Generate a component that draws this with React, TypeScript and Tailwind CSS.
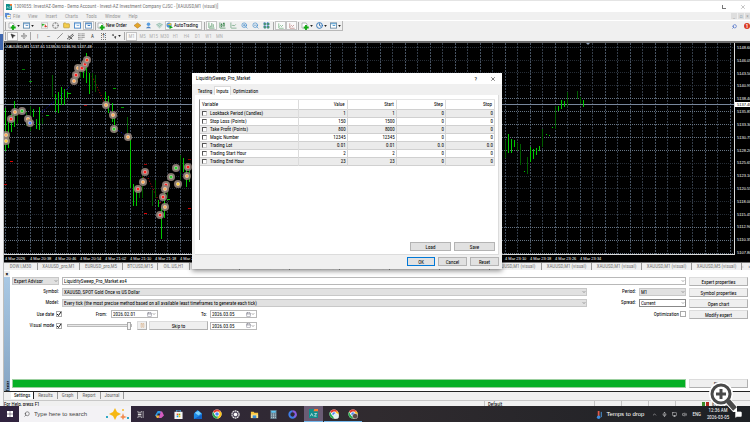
import React from "react";
import {
  BarChart3, Calendar, CandlestickChart, ChartLine, ChevronDown, ChevronUp, Clock, Crosshair, Folder,
  LayoutGrid, MessageSquare, MousePointer2, Mic, Monitor, Move, Pause, Search, Slash, Volume2, Wifi, X, ZoomIn, ZoomOut,
} from "lucide-react";

type Candle = [number, number, number, number];

const candles: Candle[] = [
  [5, 108, 151, 1], [8, 118, 148, 1], [11, 114, 132, 1], [14, 101, 127, 1], [17, 110, 124, 0], [26, 112, 126, 0], [30, 106, 131, 0],
  [33, 109, 117, 1], [36, 119, 129, 1], [39, 107, 130, 1], [42, 118, 124, 0], [52, 75, 97, 0], [55, 94, 112, 1], [58, 92, 113, 1],
  [61, 87, 105, 1], [64, 89, 105, 1], [67, 92, 98, 1], [77, 64, 82, 0], [80, 64, 78, 0], [83, 66, 78, 1], [86, 53, 83, 1], [89, 73, 94, 1],
  [92, 73, 90, 0], [95, 75, 92, 0], [105, 92, 104, 1], [108, 96, 113, 1], [112, 103, 122, 1], [114, 118, 133, 1], [127, 117, 140, 0],
  [130, 140, 188, 1], [133, 184, 206, 1], [136, 190, 206, 1], [139, 188, 198, 0], [142, 176, 198, 0], [152, 190, 206, 0],
  [155, 180, 198, 0], [158, 200, 207, 1], [161, 207, 239, 1], [164, 187, 218, 1], [167, 181, 198, 0], [180, 155, 180, 0],
  [183, 158, 172, 1], [186, 165, 187, 1], [189, 170, 182, 1], [505, 140, 158, 0], [508, 134, 153, 1], [511, 139, 153, 1],
  [514, 140, 147, 1], [517, 143, 151, 0], [520, 144, 165, 0], [524, 171, 172, 1], [527, 157, 174, 0], [530, 147, 162, 1],
  [533, 149, 159, 1], [536, 148, 155, 1], [539, 146, 151, 1], [542, 129, 147, 0], [546, 134, 135, 1], [549, 135, 136, 1],
  [552, 127, 128, 1], [555, 106, 129, 0], [558, 106, 111, 1], [561, 100, 109, 1], [564, 101, 107, 1], [567, 92, 106, 0],
  [577, 91, 99, 0], [580, 97, 104, 0], [583, 100, 107, 1],
];

const trades: [number, number, string][] = [
  [74, 81, "#ffb060"], [76, 75, "#ff2020"], [78, 68, "#ffb060"], [82, 68, "#ff2020"], [85, 64, "#ff2020"], [87, 60, "#ff4020"],
  [22, 111, "#30d030"], [15, 112, "#ffb060"], [11, 119, "#ff2020"], [28, 119, "#ffb060"], [30, 123, "#5080ff"], [106, 105, "#ffb060"],
  [113, 115, "#ffb060"], [114, 129, "#30d030"], [6, 135, "#ffb060"], [6, 141, "#ffd040"], [128, 137, "#ffb060"], [145, 172, "#ff2020"],
  [143, 182, "#ffb060"], [138, 189, "#ff2020"], [176, 168, "#30d030"], [171, 177, "#30d030"], [178, 184, "#ffd040"],
  [166, 185, "#ff2020"], [165, 189, "#ffb060"], [163, 197, "#ff2020"], [165, 207, "#ffb060"], [160, 215, "#ff2020"],
  [188, 167, "#ff2020"], [187, 176, "#ffb060"],
];

const marks: [number, number, string][] = [
  [22, 69, "#008000"], [29, 81, "#00a000"], [84, 105, "#a00000"], [113, 88, "#00a000"], [46, 115, "#00c000"], [68, 93, "#00c000"],
  [10, 161, "#e00000"], [4, 184, "#b00000"], [144, 164, "#a00000"], [144, 213, "#e00000"], [188, 208, "#e00000"], [188, 159, "#800000"],
  [121, 107, "#00a000"], [167, 199, "#00c000"],
];

const rowsY = [47, 60, 72, 85, 98, 111, 124, 137, 150, 163, 176, 188, 201, 214, 227, 240, 253];
const strong = [98, 111, 124, 137, 150, 227, 240, 253];
const prices = ["5148.60", "5146.05", "5143.50", "5140.95", "5138.40", "5135.85", "5133.30", "5130.75", "5128.20", "5125.65", "5123.10", "5120.55", "5118.00", "5115.45", "5112.90", "5110.35", "5107.80"];
const times = ["4 Mar 2026", "4 Mar 20:38", "4 Mar 20:46", "4 Mar 20:54", "4 Mar 21:02", "4 Mar 21:10", "4 Mar 21:18", "4 Mar 21:26", "4 Mar 21:34", "4 Mar 21:42", "4 Mar 21:50", "4 Mar 21:58", "4 Mar 22:06", "4 Mar 22:14", "4 Mar 22:22", "4 Mar 22:30", "4 Mar 22:38", "4 Mar 22:46", "4 Mar 22:54", "4 Mar 23:02", "4 Mar 23:10", "4 Mar 23:18", "4 Mar 23:26", "4 Mar 23:34"];

const narrow = "font-['Liberation_Sans_Narrow','Roboto_Condensed','Open_Sans_Condensed','DejaVu_Sans_Condensed','Liberation_Sans',sans-serif]";

function Plot() {
  return (
    <svg className="block h-[211px] w-full" aria-label="XAUUSD price chart">
      <defs>
        <pattern id="cols" x="1" y="0" width="25" height="3" patternUnits="userSpaceOnUse">
          <rect x="0" width="1" height="2" fill="#465261" />
          <rect x="12" width="1" height="2" fill="#333c48" />
        </pattern>
      </defs>
      <rect width="100%" height="100%" fill="url(#cols)" />
      <g transform="translate(-4 -43)">
        {rowsY.map((y) => (
          <line key={y} x1="4" x2="3000" y1={y + 0.5} y2={y + 0.5} stroke={strong.includes(y) ? "#667484" : "#262d36"} strokeDasharray="1 1" />
        ))}
        <line x1="4" x2="3000" y1="104.5" y2="104.5" stroke="#78879c" />
        <path d="M42 112L56 100L70 86M22 111L30 123L36 122M106 105L114 116M116 129L128 137M175 168L184 176M158 206L161 200" fill="none" stroke="#1515d0" strokeDasharray="1 2" />
        <path d="M92 76L106 106M148 178L160 204L166 190M11 119L15 112L20 115M138 189L145 174" fill="none" stroke="#d01010" strokeDasharray="1 2" />
        {candles.map(([x, a, b, bright]) => (
          <rect key={x} x={x} y={a} width="1" height={b - a} fill={bright ? "#00c800" : "#005c00"} />
        ))}
        {marks.map(([x, y, c]) => <rect key={x + "-" + y} x={x} y={y} width="3" height="1" fill={c} />)}
        {trades.map(([x, y, c]) => (
          <g key={x + "-" + y}>
            <circle cx={x} cy={y} r="4" fill="#94837a" fillOpacity=".9" />
            <circle cx={x} cy={y} r="2" fill="#d9cfc6" />
            <circle cx={x} cy={y} r="1.5" fill={c} />
          </g>
        ))}
        <path d="M586 43h4l-2 2z" fill="#8c9db5" />
      </g>
    </svg>
  );
}

function Tool({ label, pressed, drop, children }: { label: string; pressed?: boolean; drop?: boolean; children: React.ReactNode }) {
  return (
    <button aria-label={label} className={`flex h-[9px] shrink-0 items-center justify-center ${drop ? "w-[14px]" : "w-[11px]"} ${pressed ? "border border-[#c4c4c4] bg-[#fafafa]" : ""}`}>
      {children}
      {drop && <svg viewBox="0 0 4 3" className="ml-px h-[2px] w-[3px] shrink-0"><path d="M0 0h4L2 3z" fill="#222" /></svg>}
    </button>
  );
}

const Sep = () => <span className="mx-px h-[8px] w-px shrink-0 bg-[#a8a8a8]" />;

function DocPlus({ fill = "#fff" }: { fill?: string }) {
  return (
    <svg viewBox="0 0 8 8" className="size-[8px] shrink-0">
      <path d="M1 1h4l1 1v4H1z" fill={fill} stroke="#8a8f94" strokeWidth=".6" />
      <path d="M5 3v5M2.700 5.500h5" stroke="#12a812" strokeWidth="1.800" />
    </svg>
  );
}

function PaneIcon({ a, b }: { a: string; b: string }) {
  return (
    <svg viewBox="0 0 8 8" className="size-[7px] shrink-0">
      <rect x=".5" y="1" width="7" height="6" fill="#fff" stroke={a} />
      <path d="M1 2h6M3 4h3" stroke={b} strokeWidth="1.200" />
    </svg>
  );
}

function TopBars() {
  return (
    <header className={`text-[5px] leading-[7px] ${narrow}`}>
      <div className="flex h-[12px] items-center border-t border-[#e4e4e4] bg-white pl-[2px] pr-1 text-[#777]">
        <svg viewBox="0 0 7 7" className="mr-[2px] size-[6px]"><rect width="7" height="7" fill="#0f8d8c" /><path d="M4 0h3v2H5z" fill="#ff7a30" /><path d="M1 5l1-2 1 2M4 3h2L4 5h2" fill="none" stroke="#fff" strokeWidth=".6" /></svg>
        <h1 className="flex-1 whitespace-nowrap">1309055: InvestAZ-Demo - Demo Account - Invest-AZ Investment Company CJSC - [XAUUSD,M1 (visual)]</h1>
        <button aria-label="Maximize" className="mr-[14px] size-[4px] border-b border-l border-[#777]" />
        <button aria-label="Close window"><X size={6} color="#888" /></button>
      </div>
      <nav className="flex h-[9px] items-center gap-[8px] border-b border-white pl-[1px] text-[#999]">
        <svg viewBox="0 0 7 7" className="-mr-[6px] size-[6px]"><rect width="5" height="5" fill="#5b8fd8" /><rect x="2" y="2" width="5" height="5" fill="#fff" stroke="#4a78c0" strokeWidth=".8" /><path d="M3 4h3" stroke="#e0b030" /></svg>
        {["File", "View", "Insert", "Charts", "Tools", "Window", "Help"].map((m) => <button key={m}>{m}</button>)}
        <span className="flex flex-1 justify-end gap-px">
          <button aria-label="Minimize chart" className="h-[6px] w-[6px] bg-[#dedede] leading-[4px]">_</button>
          <button aria-label="Restore chart" className="h-[6px] w-[6px] bg-[#dedede] leading-[5px] text-[#5b7fa0]">▫</button>
          <button aria-label="Close chart" className="h-[6px] w-[5px] bg-[#dedede] leading-[5px]">×</button>
        </span>
      </nav>
      <div className="flex h-[10px] items-center">
        <div className="flex h-[10px] items-center border-b border-r border-[#b8b8b8]">
          <Sep />
          <Tool label="New chart" drop><DocPlus /></Tool>
          <Tool label="Profiles" drop><PaneIcon a="#5b88ad" b="#6fa0d0" /></Tool>
          <span className="w-[4px]" />
          <Tool label="Market watch"><svg viewBox="0 0 8 8" className="size-[7px]"><rect x=".5" y="1" width="7" height="6" fill="#fff" stroke="#c0c0c0" /><path d="M2 2v3M1 3h3" stroke="#12a812" /><path d="M5 3v3M4 5h3" stroke="#d03020" /></svg></Tool>
          <Tool label="Data window"><Crosshair size={7} color="#777" /></Tool>
          <Tool label="Navigator"><Folder size={7} color="#ad8a20" fill="#f4cd4d" /></Tool>
          <Tool label="Terminal"><PaneIcon a="#3d7fc4" b="#8bb8e4" /></Tool>
          <Tool label="Strategy tester" pressed><PaneIcon a="#6a90b8" b="#3d7fc4" /></Tool>
          <Sep />
          <button className="flex w-[35px] items-center gap-px text-black"><DocPlus /><span className="whitespace-nowrap">New Order</span></button>
          <Tool label="MetaEditor"><svg viewBox="0 0 8 8" className="size-[7px]"><path d="M4 1l4 3-4 3-4-3z" fill="#e5a72b" stroke="#a8701a" strokeWidth=".6" /></svg></Tool>
          <Tool label="Community"><svg viewBox="0 0 8 8" className="size-[7px]"><circle cx="4" cy="2.500" r="2" fill="#5a9ee0" /><path d="M1 7q3-4 6 0z" fill="#4b80c0" /></svg></Tool>
          <Tool label="Signals"><Wifi size={7} color="#4a9a7c" /></Tool>
          <button className="flex h-[9px] w-[37px] items-center gap-px border border-[#c4c4c4] bg-[#fafafa] text-black">
            <svg viewBox="0 0 8 8" className="size-[7px] shrink-0"><circle cx="3.500" cy="3.500" r="3" fill="#4f93d8" /><path d="M1 3l5-2v3z" fill="#f0c040" /><path d="M4 4v4l4-2z" fill="#12a812" /></svg>
            <span>AutoTrading</span>
          </button>
          <span className="w-px" /><Sep />
          <Tool label="Bar chart" pressed><BarChart3 size={7} color="#287a3c" /></Tool>
          <Tool label="Candlesticks"><CandlestickChart size={7} color="#287a3c" /></Tool>
          <Tool label="Line chart"><ChartLine size={7} color="#4c9160" /></Tool>
          <Tool label="Zoom in"><ZoomIn size={7} color="#2c80c8" /></Tool>
          <Tool label="Zoom out"><ZoomOut size={7} color="#2c80c8" /></Tool>
          <Tool label="Tile windows"><LayoutGrid size={7} color="#2b72c0" fill="#64b530" /></Tool>
          <Sep />
          <Tool label="Auto scroll" pressed><ChartLine size={6} color="#349048" /></Tool>
          <Tool label="Chart shift" pressed><ChartLine size={6} color="#a04c48" /></Tool>
          <Sep />
          <Tool label="Indicators" drop><DocPlus /></Tool>
          <Tool label="Periods" drop><Clock size={7} color="#226cb4" strokeWidth={3} /></Tool>
          <Tool label="Templates" drop><PaneIcon a="#6a88a0" b="#54a0d4" /></Tool>
        </div>
        <span className="flex flex-1 items-center justify-end gap-[7px]">
          <Search size={5} color="#3b62c4" strokeWidth={3} className="-scale-x-100" />
          <span className="size-[6px] rounded-full bg-[#d93a22] text-center font-bold leading-[6px] text-white">1</span>
        </span>
      </div>
      <div className="flex h-[10px] items-center text-[#333]">
        <Sep />
        <Tool label="Cursor" pressed><MousePointer2 size={6} fill="#333" /></Tool>
        <Tool label="Crosshair"><Move size={6} color="#555" /></Tool>
        <Sep />
        <Tool label="Vertical line">|</Tool>
        <Tool label="Horizontal line">—</Tool>
        <Tool label="Trend line"><Slash size={6} /></Tool>
        <Tool label="Channel"><svg viewBox="0 0 8 8" className="size-[7px]"><path d="M0 7l7-6M2 8l6-6M1 3l5 4" stroke="#333" strokeWidth=".9" /></svg></Tool>
        <Tool label="Fibonacci"><svg viewBox="0 0 8 8" className="size-[7px]"><path d="M0 1h8M0 3h8M0 5h8M0 7h5" stroke="#555" strokeWidth=".8" strokeDasharray="1 .5" /></svg></Tool>
        <Tool label="Text">A</Tool>
        <Tool label="Text label"><span className="border border-dotted border-[#777] leading-[5px]">T</span></Tool>
        <Tool label="Arrows" drop><svg viewBox="0 0 8 8" className="size-[6px]"><path d="M1 3l2-2 1 3zM4 5l3-1-1 4z" fill="#333" /></svg></Tool>
        <Sep />
        <span className="flex text-[#b0b0b0]">
          {["M1", "M5", "M15", "M30", "H1", "H4", "D1", "W1", "MN"].map((p, i) => <Tool key={p} label={p} pressed={i === 0}>{p}</Tool>)}
        </span>
      </div>
    </header>
  );
}

function Chart() {
  return (
    <main className="h-[221px] border-t-2 border-[#6e6e6e] bg-black text-[4px] leading-[5px] text-white">
      <div className="flex">
        <div className="relative min-w-0 flex-1 border-b border-r border-[#dcdcdc]">
          <Plot />
          <p className="absolute left-[2px] top-[1px] whitespace-nowrap">XAUUSD,M1 5137.61 5138.30 5136.96 5137.48</p>
        </div>
        <div className="relative flex w-[15px] flex-col justify-between overflow-hidden pl-[2px] pt-[2px]">
          {prices.map((p) => <span key={p}>{p}</span>)}
          <span className="absolute left-0 top-[59px] w-full bg-white pl-[2px] text-black">5137.48</span>
        </div>
      </div>
      <div className="flex overflow-hidden pl-px pt-[1px]">
        {times.map((t) => <span key={t} className="w-[25px] shrink-0 whitespace-nowrap">{t}</span>)}
      </div>
    </main>
  );
}

const chartTabs: [string, string][] = [
  ["DOW.I,M30", "w-[34px]"], ["XAUUSD_pro,M1", "w-[42px]"], ["EURUSD_pro,M5", "w-[43px]"], ["BTCUSD,M15", "w-[35px]"], ["OIL.US,H1", "w-[32px]"],
  ["XAUUSD,M1 (visual)", "w-[50px]"], ["XAUUSD,M1 (visual)", "w-[50px]"], ["XAUUSD,M1 (visual)", "w-[50px]"], ["XAUUSD,M1 (visual)", "w-[50px]"],
  ["XAUUSD,M1 (visual)", "w-[50px]"], ["XAUUSD,M1 (visual)", "w-[50px]"], ["XAUUSD,M1 (visual)", "w-[52px]"], ["XAUUSD,M1 (visual)", "w-[50px]"],
  ["XAUUSD,M1 (visual)", "w-[50px]"], ["XAUUSD,M1 (visual)", "w-[50px]"], ["XAUUSD,M5 (visual)", "w-[50px]"],
];

const selectLook = "block h-[8px] w-full appearance-none border pl-px pr-[8px] leading-[6px] text-black";

function Drop({ label, value, tone = "border-[#c8c8c8] bg-[#e1e1e1]" }: { label: string; value: string; tone?: string }) {
  return (
    <span className="relative block flex-1">
      <select aria-label={label} className={`${selectLook} ${tone}`}><option>{value}</option></select>
      <ChevronDown size={4} className="pointer-events-none absolute right-[1px] top-[2px]" />
    </span>
  );
}

function DateBox({ label, value }: { label: string; value: string }) {
  return (
    <span className="flex h-[8px] w-[47px] items-center border border-[#b8b8b8] bg-white pr-px">
      <input aria-label={label} defaultValue={value} className="w-0 flex-1 pl-px leading-[6px] outline-none" />
      <Calendar size={5} color="#667" /><ChevronDown size={4} />
    </span>
  );
}

function Check({ id, checked }: { id: string; checked?: boolean }) {
  return (
    <span className="relative block size-[6px]">
      <input id={id} type="checkbox" defaultChecked={checked} className="block size-[6px] appearance-none border border-[#aaa] bg-white" />
      {checked && <svg viewBox="0 0 6 6" className="pointer-events-none absolute inset-0 size-[6px]"><path d="M1 3l1.500 1.500L5 1" fill="none" stroke="#111" /></svg>}
    </span>
  );
}

const face = "border border-b-[#b0b0b0] border-r-[#b0b0b0] border-l-[#dcdcdc] border-t-[#dcdcdc] bg-[#efefef] text-center leading-[6px]";

function Tester() {
  return (
    <section className={`flex h-[120px] text-[5px] leading-[7px] text-black ${narrow}`}>
      <div className="flex w-[6px] flex-col bg-[#f0f0f0]">
        <button aria-label="Close tester" className="h-[6px] text-center text-[6px] font-bold leading-[6px]">×</button>
        <div className="flex flex-1 items-end justify-center bg-gradient-to-b from-[#a9c8e4] to-[#86a5c4]">
          <span className="text-[4px] font-bold leading-[5px] [writing-mode:sideways-lr]">Tester</span>
        </div>
      </div>
      <div className="flex flex-1 flex-col justify-between bg-white pb-[3px] pl-[2px] pr-[2px] pt-[6px]">
        <div className="flex gap-[3px]">
          <div className="flex flex-1 flex-col gap-[3px]">
            <div className="flex gap-[3px]">
              <span className="flex w-[47px]"><Drop label="Test type" value="Expert Advisor" /></span>
              <Drop label="Expert" value="LiquiditySweep_Pro_Market.ex4" tone="border-[#b8b8b8] bg-white" />
            </div>
            <div className="flex gap-[3px]">
              <span className="w-[47px] text-right">Symbol:</span><Drop label="Symbol" value="XAUUSD, SPOT Gold Once vs US Dollar" />
              <span className="w-[46px] text-right">Period:</span><span className="flex w-[47px]"><Drop label="Period" value="M1" /></span>
            </div>
            <div className="flex gap-[3px]">
              <span className="w-[47px] text-right">Model:</span><Drop label="Model" value="Every tick (the most precise method based on all available least timeframes to generate each tick)" />
              <span className="w-[46px] text-right">Spread:</span><span className="flex w-[47px]"><Drop label="Spread" value="Current" tone="border-[#888] bg-white" /></span>
            </div>
            <div className="flex items-center">
              <label htmlFor="use-date" className="mr-[2px] w-[42px] text-right">Use date</label><Check id="use-date" checked />
              <span className="w-[49px] pr-[4px] text-right">From:</span><DateBox label="From" value="2026.02.01" />
              <span className="w-[52px] pr-[3px] text-right">To:</span><DateBox label="To" value="2026.03.05" />
              <label htmlFor="optimization" className="mr-[1px] flex-1 text-right">Optimization</label><Check id="optimization" />
            </div>
            <div className="flex items-center">
              <label htmlFor="visual" className="mr-[2px] w-[42px] text-right">Visual mode</label><Check id="visual" checked />
              <span className="relative ml-[5px] flex h-[8px] w-[65px] items-center">
                <input aria-label="Speed" type="range" min="0" max="32" defaultValue="32" className="h-[3px] w-full appearance-none border border-[#bbb] bg-[#e8e8e8] [&::-webkit-slider-thumb]:h-[8px] [&::-webkit-slider-thumb]:w-[4px] [&::-webkit-slider-thumb]:appearance-none [&::-webkit-slider-thumb]:border [&::-webkit-slider-thumb]:border-[#aaa] [&::-webkit-slider-thumb]:bg-[#f4f4f4]" />
              </span>
              <button aria-label="Pause" className={`${face} ml-[5px] flex h-[9px] w-[10px] items-center justify-center`}><Pause size={5} color="#d8a878" /></button>
              <button className={`${face} ml-[2px] mr-[2px] h-[9px] w-[59px]`}>Skip to</button>
              <DateBox label="Skip date" value="2026.03.05" />
            </div>
          </div>
          <div className="flex w-[59px] flex-col gap-[2px]">
            {["Expert properties", "Symbol properties", "Open chart", "Modify expert"].map((b) => <button key={b} className={`${face} h-[9px]`}>{b}</button>)}
          </div>
        </div>
        <div className="flex gap-[3px]">
          <div role="progressbar" aria-label="Test progress" className="h-[9px] flex-1 border border-[#9bcf9f] bg-[#06b025]" />
          <button className={`${face} h-[9px] w-[59px]`}>Start</button>
        </div>
      </div>
    </section>
  );
}

const inputs = [
  ["Lookback Period (Candles)", "1", "1", "0", "0"], ["Stop Loss (Points)", "150", "1500", "0", "0"], ["Take Profit (Points)", "800", "8000", "0", "0"],
  ["Magic Number", "12345", "12345", "0", "0"], ["Trading Lot", "0.01", "0.01", "0.0", "0.0"], ["Trading Start Hour", "2", "2", "0", "0"], ["Trading End Hour", "23", "23", "0", "0"],
];

function Dialog() {
  const btn = "h-[9px] border border-[#b4b4b4] bg-[#e1e1e1] leading-[6px]";
  return (
    <div role="dialog" aria-label="LiquiditySweep_Pro_Market" className={`absolute left-[192px] top-[73px] flex h-[196px] w-[310px] flex-col bg-[#f0f0f0] text-[5px] leading-[7px] text-black shadow-[0_2px_5px_rgba(0,0,0,.45)] ${narrow}`}>
      <div className="flex h-[11px] items-center bg-white pl-[4px] pr-[6px]">
        <h2 className="flex-1">LiquiditySweep_Pro_Market</h2>
        <button aria-label="Help" className="mr-[13px] text-[6px]">?</button>
        <button aria-label="Close"><X size={6} /></button>
      </div>
      <div role="tablist" className="flex h-[11px] items-end pl-[4px]">
        <button role="tab" className="w-[18px]">Testing</button>
        <button role="tab" aria-selected="true" className="h-[9px] w-[17px] border-x border-t border-[#dadada] bg-white">Inputs</button>
        <button role="tab" className="pl-[2px]">Optimization</button>
      </div>
      <div className="mx-[3px] flex flex-1 flex-col border-b border-r border-[#dcdcdc] bg-white pl-[4px] pr-[3px] pt-[4px]">
        <div className="h-[141px] border-l border-t border-l-[#8a8a8a] border-t-[#e4e4e4]">
          <table className="w-full table-fixed border-collapse">
            <thead>
              <tr className="h-[9px] border-b border-[#d0d0d0]">
                {["Variable", "Value", "Start", "Step", "Stop"].map((h, i) => <th key={h} className={`border-r border-[#dcdcdc] p-0 font-normal ${i ? "pr-[2px] text-right" : "w-[98px] pl-[2px] text-left"}`}>{h}</th>)}
              </tr>
            </thead>
            <tbody>
              {inputs.map(([name, ...values], r) => (
                <tr key={name} className={`h-[8px] ${r % 2 ? "bg-white" : "border-y border-[#d0d0d0] bg-[#ebebeb]"}`}>
                  <td className="border-r border-[#dcdcdc] p-0">
                    <label className="flex items-center gap-[3px] pl-[2px]"><input type="checkbox" className="size-[5px] appearance-none border border-b-[#ccc] border-l-[#555] border-r-[#ccc] border-t-[#555] bg-white" />{name}</label>
                  </td>
                  {values.map((v, i) => <td key={i} className="border-r border-[#d4d4d4] p-0 pr-px text-right">{v}</td>)}
                </tr>
              ))}
            </tbody>
          </table>
        </div>
        <div className="flex justify-end gap-[3px] pt-[2px]">
          <button className={`${btn} w-[41px]`}>Load</button><button className={`${btn} w-[41px]`}>Save</button>
        </div>
      </div>
      <div className="flex h-[14px] items-start justify-end gap-[3px] pr-[3px] pt-[2px]">
        <button className="h-[9px] w-[28px] border border-[#0078d7] bg-[#e1e1e1] leading-[6px]">OK</button>
        <button className={`${btn} w-[29px]`}>Cancel</button><button className={`${btn} w-[29px]`}>Reset</button>
      </div>
    </div>
  );
}

function Chrome({ user }: { user?: string }) {
  return (
    <svg viewBox="0 0 24 24" className="size-[10px]">
      <circle cx="12" cy="12" r="11" fill="#fff" />
      <path d="M12 1a11 11 0 0 1 9.500 5.500H12a5.500 5.500 0 0 0-5 3.200L2.500 6.500A11 11 0 0 1 12 1z" fill="#e33b2e" />
      <path d="M21.500 6.500A11 11 0 0 1 12 23l4.800-8.300A5.500 5.500 0 0 0 12 6.500z" fill="#fbc116" />
      <path d="M2.500 6.500A11 11 0 0 0 12 23l4.800-8.300a5.500 5.500 0 0 1-9.600 0z" fill="#2da94f" />
      <circle cx="12" cy="12" r="5" fill="#4285f4" stroke="#fff" strokeWidth="1.500" />
      {user && <circle cx="17" cy="17" r="6.500" fill={user} stroke="#fff" />}
    </svg>
  );
}

function Taskbar() {
  const cell = "flex h-[16px] w-[19px] items-center justify-center";
  return (
    <footer className="flex h-[16px] items-center bg-gradient-to-r from-[#30233f] via-[#302b2f] to-[#1d2024] text-white">
      <button aria-label="Start menu" className={cell}><svg viewBox="0 0 8 8" className="size-[6px]"><path d="M0 0h3.700v3.700H0zM4.300 0H8v3.700H4.300zM0 4.300h3.700V8H0zM4.300 4.300H8V8H4.300z" fill="#fff" /></svg></button>
      <div className="flex h-[16px] w-[112px] items-center bg-[#f3f2f5] pl-[5px] text-[#333]">
        <Search size={6} className="mr-[4px] -scale-x-100" />
        <input aria-label="Search" placeholder="Type here to search" className="w-0 flex-1 text-[6px] leading-[8px] outline-none placeholder:text-[#444]" />
        <svg viewBox="0 0 26 14" className="h-[14px] w-[26px]"><path d="M10 1l2 4 4 2-4 2-2 4-2-4-4-2 4-2z" fill="#f6b813" /><path d="M18 6l1 3 3 1-3 1-1 2-1-2-2-1 2-1z" fill="#f28c50" /><path d="M1 9h2v2H1zM22 10h2v2h-2z" fill="#2fa7c4" /><path d="M17 2h2v2h-2z" fill="#f6c95a" /></svg>
      </div>
      <button aria-label="Task view" className={cell}><svg viewBox="0 0 8 8" className="size-[7px]"><path d="M1 0v1.500h4V0M1 8V6.500h4V8M7 0v8" fill="none" stroke="#ddd" strokeWidth=".8" /><rect x="1" y="3" width="4" height="2" fill="#ddd" /></svg></button>
      <button aria-label="Copilot" className={cell}><svg viewBox="0 0 10 10" className="size-[9px]"><path d="M3 1h3l1 3H3L2 8 0 6z" fill="#2c9be8" /><path d="M6 1l2 1 2 4-3 3H4l2-5z" fill="#d45bc0" /><path d="M1 6h4l-1 3H2z" fill="#f5b63c" /></svg></button>
      <button aria-label="Store" className={cell}><svg viewBox="0 0 10 10" className="size-[9px]"><path d="M3 2V0h4v2" fill="none" stroke="#4db3ee" /><rect x=".5" y="2" width="9" height="8" fill="#f5f5f5" /><path d="M3 4h1.800v1.800H3z" fill="#f25022" /><path d="M5.200 4H7v1.800H5.200z" fill="#7fba00" /><path d="M3 6.200h1.800V8H3z" fill="#00a4ef" /><path d="M5.200 6.200H7V8H5.200z" fill="#ffb900" /></svg></button>
      <button aria-label="Outlook" className={cell}><svg viewBox="0 0 10 10" className="size-[9px]"><path d="M1 4l4-4 5 4v6H1z" fill="#1d8ae6" /><path d="M2 3l4-2 3 3-3 2z" fill="#7cd0fa" /><path d="M1 10l9-5v5z" fill="#1361c2" /></svg></button>
      <button aria-label="Chrome" className={cell}><Chrome /></button>
      <button aria-label="Recorder" className={cell}><svg viewBox="0 0 10 10" className="size-[9px]"><circle cx="5" cy="5" r="4" fill="#51485c" stroke="#eee" strokeWidth="1.200" strokeDasharray="2 .5" /><circle cx="5" cy="5" r="2" fill="#fff" /></svg></button>
      <button aria-label="Explorer" className={cell}><svg viewBox="0 0 10 10" className="size-[9px]"><path d="M1 2h3l1 1h4v6H1z" fill="#f8c63e" /><path d="M1 5h8v4H1z" fill="#ffe08a" /><path d="M3 6h4v3H3z" fill="#3a8fd8" /></svg></button>
      <button aria-label="Calculator" className={cell}><svg viewBox="0 0 10 10" className="size-[9px]"><rect x="1.500" width="7" height="10" fill="#5e7786" /><path d="M2.500 1h5v2h-5z" fill="#5fc9f5" /><path d="M3 4v5M5 4v5M7 4v5" stroke="#e0edf3" strokeDasharray="1 1" /></svg></button>
      <button aria-label="Office" className={cell}><svg viewBox="0 0 10 10" className="size-[9px]"><path d="M5 1.500A3.500 3.500 0 1 0 8.500 5" fill="none" stroke="#3f7ee8" strokeWidth="2.200" /><path d="M5 1.500A3.500 3.500 0 0 1 7 8" fill="none" stroke="#8b5ce0" strokeWidth="2.200" /></svg></button>
      <button aria-label="InvestAZ" className={`${cell} ml-[2px] border-b border-[#76b9ed] bg-[#6a5c74]`}><svg viewBox="0 0 10 10" className="size-[9px]"><rect width="10" height="10" fill="#0f8d8c" /><path d="M6 0h4v2.500H5z" fill="#ff7a30" /><path d="M1.500 8L3 5l1.500 3M6 5h2.500L6 8h2.500" fill="none" stroke="#fff" strokeWidth=".7" /></svg></button>
      <button aria-label="Chrome profile 1" className={`${cell} ml-px border-b border-[#76b9ed]`}><Chrome user="#dff0ee" /></button>
      <button aria-label="Chrome profile 2" className={`${cell} border-b border-[#76b9ed]`}><Chrome user="#5b4a4a" /></button>
      <div className="flex flex-1 items-center justify-end gap-[5px] pr-[8px] text-[5px] leading-[7px]">
        <svg viewBox="0 0 8 10" className="-mr-[2px] h-[9px] w-[7px]"><path d="M3 1v6" stroke="#e05a4a" strokeWidth="2" /><circle cx="3" cy="8" r="2" fill="#3d8ee0" /><path d="M6 2v6" stroke="#54a7f0" /></svg>
        <span className="mr-[3px] text-[6px]">Temps to drop</span>
        <ChevronUp size={5} /><Mic size={5} /><Monitor size={5} /><Volume2 size={5} />
        <span className={narrow}>ENG</span>
        <span className={`w-[24px] whitespace-nowrap text-center leading-[7px] ${narrow}`}>12:36 AM<br />2026-03-05</span>
        <MessageSquare size={7} fill="#fff" />
      </div>
    </footer>
  );
}

export default function App() {
  return (
    <div className="relative flex min-h-screen flex-col overflow-hidden bg-[#f0f0f0] font-['Liberation_Sans',Arial,sans-serif]">
      <div className="flex flex-1">
        <div className="flex w-[4px] shrink-0 flex-col border-r border-[#bdbdbd] bg-[#f5f5f7]">
          <span className="h-[16px] bg-[#f7dfe3]" /><span className="h-[18px] bg-[#eef0f4]" /><span className="h-[16px] bg-[#4068b0]" /><span className="h-[54px] bg-[#f1f4fa]" /><span className="h-px bg-[#d5d5d5]" />
        </div>
        <div className="flex min-w-0 flex-1 flex-col">
          <TopBars />
          <Chart />
          <div className={`flex h-[9px] items-center overflow-hidden border-b border-white border-t border-t-[#777] text-[5px] leading-[7px] text-[#777] ${narrow}`}>
            {chartTabs.map(([t, w], i) => <button key={i} className={`${w} shrink-0 whitespace-nowrap border-r border-[#999] text-center`}>{t}</button>)}
            <span className="flex flex-1 justify-end gap-[5px] pr-[2px] text-black"><span className="text-[#999]">‹</span>›</span>
          </div>
          <Tester />
          <div className={`flex h-[9px] items-start border-t border-[#222] pl-[7px] text-[5px] leading-[7px] text-[#666] ${narrow}`}>
            {["Settings", "Results", "Graph", "Report", "Journal"].map((t, i) => (
              <button key={t} className={i ? "border-r border-[#999] px-[4px]" : "h-[7px] border-r border-[#222] bg-white px-[3px] text-black"}>{t}</button>
            ))}
          </div>
          <div className={`flex h-[6px] items-start overflow-hidden border-t border-[#c8c8c8] text-[5px] leading-[6px] text-black ${narrow}`}>
            <span className="flex-1">For Help, press F1</span>
            <span className="w-[110px] border-l border-[#c4c4c4] pl-[3px]">Default</span>
            {[1, 2, 3, 4].map((n) => <span key={n} className="h-[5px] w-[27px] border-l border-[#c4c4c4]" />)}
            <svg viewBox="0 0 8 4" className="mr-[2px] mt-px h-[4px] w-[8px]"><path d="M0 0h3v4H0z" fill="#3a8c2a" /><path d="M4 0h3v4H4z" fill="#b02a20" /></svg>
            <span className="w-[38px] whitespace-nowrap">870/3 kb</span>
          </div>
        </div>
      </div>
      <Taskbar />
      <Dialog />
      <svg viewBox="0 0 28 30" className="absolute bottom-[10px] right-[13px] h-[30px] w-[28px]">
        <path d="M18 18l8 9" stroke="#fff" strokeWidth="7" strokeLinecap="round" />
        <circle cx="12" cy="12" r="10" fill="#fff" stroke="#fff" strokeWidth="4" />
        <circle cx="12" cy="12" r="9" fill="#fff" stroke="#4a4a4a" strokeWidth="3" />
        <path d="M12 7v10M7 12h10" stroke="#4a4a4a" strokeWidth="3" />
        <path d="M19 19l7 8" stroke="#4a4a4a" strokeWidth="5" />
      </svg>
    </div>
  );
}
